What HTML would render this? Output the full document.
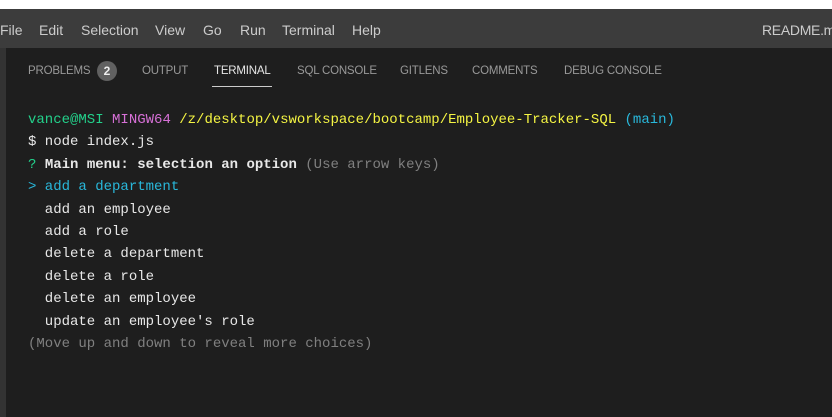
<!DOCTYPE html>
<html><head><style>
body{margin:0;width:832px;height:417px;background:#1e1e1e;overflow:hidden;position:relative;font-family:"Liberation Sans",sans-serif}
.top{position:absolute;left:0;top:0;width:832px;height:9px;background:#fff}
.menu{position:absolute;left:0;top:9px;width:832px;height:39px;background:#3c3c3c;color:#ccc;font-size:14px}
.menu span{position:absolute;top:13px}
.strip{position:absolute;left:0;top:48px;width:6px;height:369px;background:#333}
.tab{position:absolute;top:65px;font-size:11.5px;color:#999;letter-spacing:-0.2px}
.badge{position:absolute;left:97px;top:61px;width:20px;height:20px;border-radius:10px;background:#616161;color:#eee;font-size:12px;text-align:center;line-height:20px;font-weight:bold}
.ul{position:absolute;left:212px;top:86px;width:60px;height:1px;background:#ccc}
.term{position:absolute;left:28px;top:109px;font-family:"Liberation Mono",monospace;font-size:14px;line-height:22.4px;color:#e8e8e8;white-space:pre}
.g{color:#23d18b}.m{color:#d670d6}.y{color:#f5f543}.c{color:#29b8db}.gr{color:#808080}.b{font-weight:bold}
</style></head><body>
<div class="top"></div>
<div class="menu">
<span style="left:0">File</span><span style="left:39px">Edit</span><span style="left:81px">Selection</span><span style="left:155px">View</span><span style="left:203px">Go</span><span style="left:240px">Run</span><span style="left:282px">Terminal</span><span style="left:352px">Help</span><span style="left:762px;letter-spacing:-0.3px">README.md</span>
</div>
<div class="strip"></div>
<span class="tab" style="left:28px">PROBLEMS</span>
<div class="badge">2</div>
<span class="tab" style="left:142px">OUTPUT</span>
<span class="tab" style="left:214px;color:#e7e7e7">TERMINAL</span>
<div class="ul"></div>
<span class="tab" style="left:297px">SQL CONSOLE</span>
<span class="tab" style="left:400px">GITLENS</span>
<span class="tab" style="left:472px">COMMENTS</span>
<span class="tab" style="left:564px">DEBUG CONSOLE</span>
<div class="term"><span class="g">vance@MSI</span> <span class="m">MINGW64</span> <span class="y">/z/desktop/vsworkspace/bootcamp/Employee-Tracker-SQL</span> <span class="c">(main)</span>
$ node index.js
<span class="g">?</span> <span class="b">Main menu: selection an option</span> <span class="gr">(Use arrow keys)</span>
<span class="c">&gt; add a department</span>
  add an employee
  add a role
  delete a department
  delete a role
  delete an employee
  update an employee's role
<span class="gr">(Move up and down to reveal more choices)</span></div>
</body></html>
